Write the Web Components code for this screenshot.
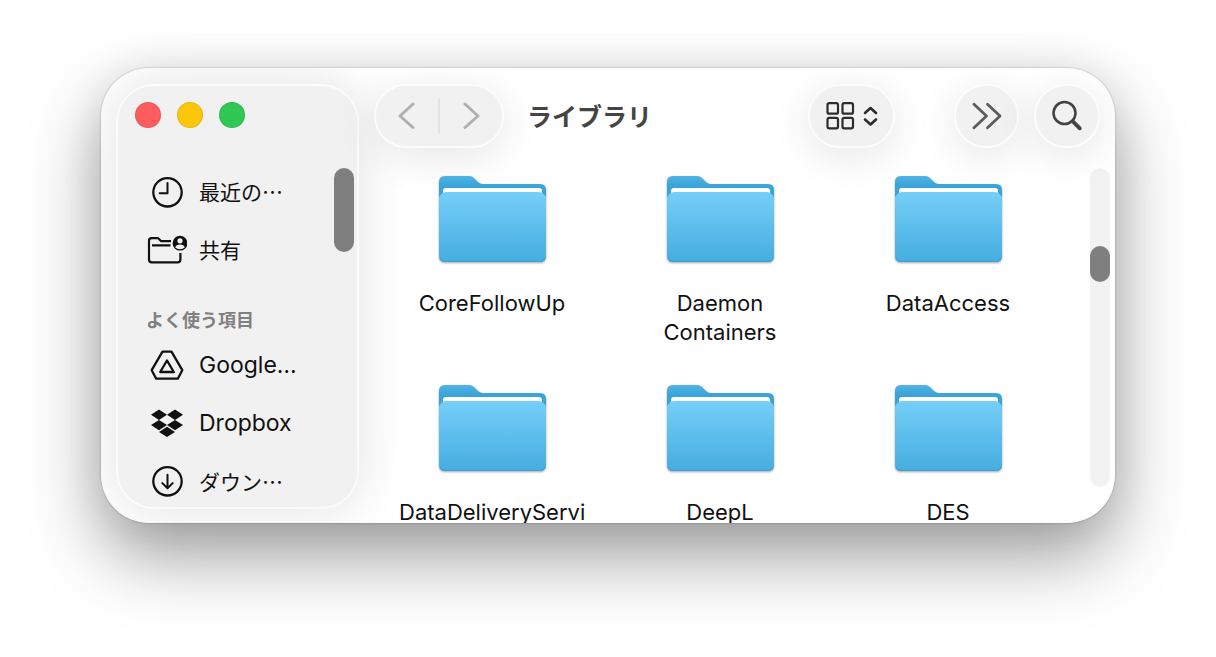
<!DOCTYPE html>
<html lang="ja">
<head>
<meta charset="utf-8">
<title>ライブラリ</title>
<style>
  html, body {
    height: 100%;
    margin: 0;
  }
  body {
    box-sizing: border-box;
    display: flex;
    padding: 68px 101px 134px;
    overflow: hidden;
    background: #fff;
    color: #111;
    font-family: Inter, "Noto Sans CJK JP", sans-serif;
    font-size: 22px;
  }
</style>
</head>
<body>
<finder-window>
  <side-bar slot="sidebar">
    <side-item icon="clock" lang="ja">最近の…</side-item>
    <side-item icon="shared" lang="ja">共有</side-item>
    <side-heading>よく使う項目</side-heading>
    <side-item icon="drive" lang="en">Google…</side-item>
    <side-item icon="dropbox" lang="en">Dropbox</side-item>
    <side-item icon="download" lang="ja">ダウン…</side-item>
  </side-bar>
  <tool-bar slot="toolbar">ライブラリ</tool-bar>
  <folder-item>CoreFollowUp</folder-item>
  <folder-item>Daemon Containers</folder-item>
  <folder-item>DataAccess</folder-item>
  <folder-item>DataDeliveryServi</folder-item>
  <folder-item>DeepL</folder-item>
  <folder-item>DES</folder-item>
</finder-window>

<script>
"use strict";

const ICONS = {
  clock: `<svg width="40" height="34" viewBox="0 0 40 34" fill="none" stroke="currentColor" stroke-width="2.3" stroke-linecap="round" stroke-linejoin="round">
    <circle cx="20.500" cy="17.300" r="14.2"/><path d="M20.500 8V18.300H12.700" stroke-width="2"/></svg>`,
  shared: `<svg width="40" height="34" viewBox="0 0 40 34" fill="none" stroke="currentColor" stroke-width="2.2" stroke-linecap="round" stroke-linejoin="round">
    <path d="M24 8.2H14.2L11.2 5.2H4.6Q2 5.2 2 7.8V26.6Q2 29.4 4.8 29.4H30.6Q33.4 29.4 33.4 26.6V20M5 12.3H23.5" stroke-linecap="butt"/>
    <circle cx="33" cy="10.2" r="7.4" fill="currentColor" stroke="none"/>
    <circle cx="33" cy="7.8" r="2.6" fill="#f1f1f1" stroke="none"/>
    <path d="M28.2 14.6Q29 11.6 33 11.6Q37 11.6 37.8 14.6Q35.8 16.2 33 16.2Q30.2 16.2 28.2 14.6Z" fill="#f1f1f1" stroke="none"/></svg>`,
  drive: `<svg width="40" height="34" viewBox="0 0 40 34" fill="none" stroke="currentColor" stroke-width="2.3" stroke-linejoin="round">
    <path d="M15.5 2.700H24.5L35.3 21.2L30.8 29.700H9.2L4.7 21.2Z"/><path d="M20 11.500L26.800 23H13.200Z"/></svg>`,
  dropbox: `<svg width="40" height="34" viewBox="0 0 40 34" fill="currentColor">
    <path d="M12 2.500L20 7.700L12 12.900L4 7.700ZM28 2.500L36 7.700L28 12.900L20 7.700ZM12 12.900L20 18.100L12 23.300L4 18.100ZM28 12.900L36 18.100L28 23.300L20 18.100ZM20 19.700L28 24.900L20 30.100L12 24.900Z"/></svg>`,
  download: `<svg width="40" height="34" viewBox="0 0 40 34" fill="none" stroke="currentColor" stroke-width="2.3" stroke-linecap="round" stroke-linejoin="round">
    <circle cx="20.500" cy="16.300" r="14.2"/><path d="M20.500 9.800V22.800M15.300 18.100L20.500 23.300L25.700 18.100" stroke-width="2"/></svg>`,
  back: `<svg width="20" height="28" viewBox="0 0 20 28" fill="none" stroke="#b0b0b0" stroke-width="3" stroke-linecap="round" stroke-linejoin="round"><path d="M16 2L3 14L16 25.500"/></svg>`,
  forward: `<svg width="20" height="28" viewBox="0 0 20 28" fill="none" stroke="#b0b0b0" stroke-width="3" stroke-linecap="round" stroke-linejoin="round"><path d="M4 2L17 14L4 25.500"/></svg>`,
  grid: `<svg width="52" height="28" viewBox="0 0 52 28" fill="none" stroke="#2c2c2c" stroke-width="2.2" stroke-linecap="round" stroke-linejoin="round">
    <rect x="1.500" y="1.200" width="10.500" height="10.500" rx="1.800"/><rect x="16.500" y="1.200" width="10.500" height="10.500" rx="1.800"/>
    <rect x="1.500" y="15.800" width="10.500" height="10.500" rx="1.800"/><rect x="16.500" y="15.800" width="10.500" height="10.500" rx="1.800"/>
    <path d="M39 11L44.500 6L50 11M39 17.500L44.500 22.500L50 17.500" stroke-width="2.600"/></svg>`,
  more: `<svg width="30" height="28" viewBox="0 0 30 28" fill="none" stroke="#5c5c5c" stroke-width="2.800" stroke-linecap="round" stroke-linejoin="round"><path d="M2 2.200L14.500 14L2 25.800M15.500 2.200L28 14L15.500 25.800"/></svg>`,
  search: `<svg width="32" height="32" viewBox="0 0 32 32" fill="none" stroke="#444" stroke-linecap="round"><circle cx="13.500" cy="13" r="11" stroke-width="2.600"/><path d="M21.800 21.300L28.800 28.300" stroke-width="3.800"/></svg>`
};

class FinderWindow extends HTMLElement {
  constructor() {
    super();
    this.attachShadow({mode: 'open'}).innerHTML = `
      <style>
        :host {
          box-sizing: border-box;
          flex: 1;
          min-width: 0;
          display: flex;
          padding: 16px 0 14px 15px;
          overflow: hidden;
          border-radius: 48px;
          background: #fff;
          box-shadow: 0 0 1px 1px rgba(0, 0, 0, .1),
            0 32px 72px rgba(0, 0, 0, .4),
            0 0 40px rgba(0, 0, 0, .06);
        }
        main {
          flex: 1;
          min-width: 0;
          display: flex;
          flex-direction: column;
        }
        .content {
          flex: 1;
          min-height: 0;
          display: flex;
          gap: 28px;
          padding-right: 5px;
        }
        .files {
          flex: 1;
          display: grid;
          grid-template-columns: repeat(3, 1fr);
          align-content: start;
          row-gap: 38px;
          padding: 28px 0 0 19px;
        }
        .track {
          display: flex;
          flex-direction: column;
          margin: 20px 0 22px;
        }
      </style>
      <slot name="sidebar"></slot>
      <main>
        <slot name="toolbar"></slot>
        <div class="content">
          <div class="files"><slot></slot></div>
          <div class="track"><scroll-thumb style="--start: 78px; --size: 36px; --track: rgba(0, 0, 0, .05)"></scroll-thumb></div>
        </div>
      </main>
    `;
  }
}

class ScrollThumb extends HTMLElement {
  constructor() {
    super();
    this.attachShadow({mode: 'open'}).innerHTML = `
      <style>
        :host {
          box-sizing: border-box;
          flex: 1;
          display: block;
          width: 20px;
          padding-top: var(--start, 0);
          border-radius: 10px;
          background: var(--track, transparent);
        }
        div {
          height: var(--size);
          border-radius: 10px;
          background: #7f7f7f;
        }
      </style>
      <div></div>
    `;
  }
}

class SideBar extends HTMLElement {
  constructor() {
    super();
    this.attachShadow({mode: 'open'}).innerHTML = `
      <style>
        :host {
          box-sizing: border-box;
          flex: none;
          display: flex;
          flex-direction: column;
          width: 243px;
          border: 2px solid #fbfbfb;
          border-radius: 38px;
          background: #f1f1f1;
          box-shadow: 0 0 50px rgba(0, 0, 0, .12);
        }
        .lights {
          display: flex;
          gap: 16px;
          padding: 16px 17px 0;
        }
        button {
          width: 26px;
          height: 26px;
          padding: 0;
          border: 1px solid rgba(0, 0, 0, .08);
          border-radius: 50%;
        }
        .close { background: #ff5c60; }
        .minimize { background: #fcc70b; }
        .zoom { background: #30c754; }
        .body {
          flex: 1;
          min-height: 0;
          display: flex;
          padding: 35px 3px 0 0;
        }
        nav {
          flex: 1;
          min-width: 0;
        }
        .track {
          display: flex;
          padding-top: 5px;
        }
      </style>
      <div class="lights">
        <button class="close" aria-label="閉じる"></button>
        <button class="minimize" aria-label="しまう"></button>
        <button class="zoom" aria-label="拡大"></button>
      </div>
      <div class="body">
        <nav><slot></slot></nav>
        <div class="track"><scroll-thumb style="--size: 84px"></scroll-thumb></div>
      </div>
    `;
  }
}

class SideItem extends HTMLElement {
  constructor() {
    super();
    this.attachShadow({mode: 'open'}).innerHTML = `
      <style>
        :host {
          display: block;
          font-size: 23px;
        }
        :host([lang="ja"]) {
          font-family: "Noto Sans CJK JP", sans-serif;
          font-size: 21px;
        }
        a {
          display: flex;
          align-items: center;
          gap: 12px;
          height: 58px;
          padding-left: 29px;
          color: inherit;
          text-decoration: none;
          white-space: nowrap;
        }
        svg {
          display: block;
        }
        span {
          padding-bottom: 3px;
        }
      </style>
      <a href="#">${ICONS[this.getAttribute('icon')]}<span><slot></slot></span></a>
    `;
  }
}

class SideHeading extends HTMLElement {
  constructor() {
    super();
    this.attachShadow({mode: 'open'}).innerHTML = `
      <style>
        :host {
          display: block;
          padding: 28px 0 6px 28px;
          color: #808080;
          font: 700 18px/24px "Noto Sans CJK JP", sans-serif;
        }
      </style>
      <slot></slot>
    `;
  }
}

class ToolBar extends HTMLElement {
  constructor() {
    super();
    this.attachShadow({mode: 'open'}).innerHTML = `
      <style>
        :host {
          display: flex;
          align-items: center;
          padding: 0 15px;
        }
        h1 {
          flex: 1;
          margin: 0 0 0 23px;
          padding-bottom: 2px;
          color: #444;
          font: 700 25px/32px "Noto Sans CJK JP", sans-serif;
        }
        .more {
          margin: 0 15px 0 59px;
        }
        i {
          width: 2px;
          height: 36px;
          background: #e4e4e4;
        }
      </style>
      <glass-pill>
        <icon-button icon="back" label="戻る"></icon-button>
        <i></i>
        <icon-button icon="forward" label="進む"></icon-button>
      </glass-pill>
      <h1><slot></slot></h1>
      <glass-pill><icon-button icon="grid" label="表示" style="--width: 83px"></icon-button></glass-pill>
      <glass-pill class="more"><icon-button icon="more" label="その他" style="--width: 61px"></icon-button></glass-pill>
      <glass-pill><icon-button icon="search" label="検索"></icon-button></glass-pill>
    `;
  }
}

class GlassPill extends HTMLElement {
  constructor() {
    super();
    this.attachShadow({mode: 'open'}).innerHTML = `
      <style>
        :host {
          display: flex;
          align-items: center;
          border: 2px solid #fcfcfc;
          border-radius: 33px;
          background: #f1f1f1;
          box-shadow: 0 8px 40px rgba(0, 0, 0, .1);
        }
      </style>
      <slot></slot>
    `;
  }
}

class IconButton extends HTMLElement {
  constructor() {
    super();
    this.attachShadow({mode: 'open'}).innerHTML = `
      <style>
        :host {
          display: block;
        }
        button {
          display: flex;
          align-items: center;
          justify-content: center;
          width: var(--width, 62px);
          height: 60px;
          padding: 0;
          border: 0;
          background: none;
        }
      </style>
      <button aria-label="${this.getAttribute('label')}">${ICONS[this.getAttribute('icon')]}</button>
    `;
  }
}

class FolderItem extends HTMLElement {
  constructor() {
    super();
    this.attachShadow({mode: 'open'}).innerHTML = `
      <style>
        :host {
          display: flex;
          justify-content: center;
        }
        button {
          display: flex;
          flex-direction: column;
          align-items: center;
          gap: 27px;
          width: 190px;
          padding: 0;
          border: 0;
          background: none;
          color: inherit;
          font: inherit;
          line-height: 29px;
        }
        svg {
          display: block;
          overflow: visible;
          filter: drop-shadow(0 1px 1px rgba(0, 0, 0, .35));
        }
        span {
          max-width: 186px;
        }
      </style>
      <button>
        <svg width="107" height="86" viewBox="0 0 107 86">
          <defs>
            <linearGradient id="back" x1="0" y1="0" x2="0" y2="1">
              <stop offset="0" stop-color="#51b4e4"/><stop offset=".25" stop-color="#3aa3d8"/>
            </linearGradient>
            <linearGradient id="front" x1="0" y1="0" x2="0" y2="1">
              <stop offset="0" stop-color="#75cff8"/><stop offset="1" stop-color="#45ade0"/>
            </linearGradient>
          </defs>
          <path fill="url(#back)" d="M0 6Q0 0 6 0H30Q33 0 35 2L39 6Q41 8 44 8H101Q107 8 107 14V40H0Z"/>
          <path fill="#fff" d="M4 20V15Q4 12 7 12H100Q103 12 103 15V20Z"/>
          <path fill="url(#front)" d="M0 22Q0 20 2 18.500L3 17.500Q4.500 16 7 16H100Q102.500 16 104 17.500L105 18.500Q107 20 107 22V80Q107 86 101 86H6Q0 86 0 80Z"/>
          <path fill="none" stroke="#3a9fd3" d="M1 82Q2.5 85.5 6 85.5H101Q104.5 85.5 106 82"/>
        </svg>
        <span><slot></slot></span>
      </button>
    `;
  }
}

window.customElements.define('scroll-thumb', ScrollThumb);
window.customElements.define('icon-button', IconButton);
window.customElements.define('glass-pill', GlassPill);
window.customElements.define('side-item', SideItem);
window.customElements.define('side-heading', SideHeading);
window.customElements.define('side-bar', SideBar);
window.customElements.define('tool-bar', ToolBar);
window.customElements.define('folder-item', FolderItem);
window.customElements.define('finder-window', FinderWindow);
</script>
</body>
</html>
